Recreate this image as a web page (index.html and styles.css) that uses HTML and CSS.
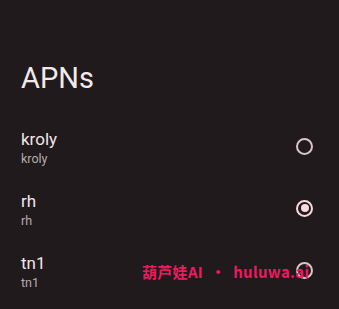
FILE: index.html
```html
<!DOCTYPE html>
<html lang="en">
<head>
    <meta charset="UTF-8">
    <meta name="viewport" content="width=device-width, initial-scale=1.0">
    <title>APNs</title>
    <link rel="stylesheet" href="styles.css">
</head>
<body>
    <h1 class="page-title">APNs</h1>

    <ul class="apn-list">
        <li class="apn-item">
            <div class="apn-text">
                <div class="apn-name">kroly</div>
                <div class="apn-sub">kroly</div>
            </div>
            <span class="radio"></span>
        </li>
        <li class="apn-item">
            <div class="apn-text">
                <div class="apn-name">rh</div>
                <div class="apn-sub">rh</div>
            </div>
            <span class="radio checked"></span>
        </li>
        <li class="apn-item">
            <div class="apn-text">
                <div class="apn-name">tn1</div>
                <div class="apn-sub">tn1</div>
            </div>
            <span class="radio"></span>
        </li>
    </ul>

    <div class="watermark">葫芦娃AI &nbsp;•&nbsp; huluwa.ai</div>
</body>
</html>
```

FILE: styles.css
```css
body {
    margin: 0;
    background-color: #201a1c;
    font-family: Roboto, "Noto Sans", sans-serif;
    color: #ece0e2;
    position: relative;
    height: 309px;
    overflow: hidden;
}
.page-title {
    margin: 0;
    padding: 60px 0 0 21px;
    font-size: 29px;
    font-weight: 400;
    line-height: 36px;
    color: #f3e9eb;
}
.apn-list {
    list-style: none;
    margin: 0;
    padding: 0;
    margin-top: 21px;
}
.apn-item {
    display: flex;
    align-items: center;
    justify-content: space-between;
    height: 62px;
    padding: 0 26px 0 21px;
}
.apn-name {
    font-size: 17px;
    line-height: 22px;
    color: #f0e6e8;
}
.apn-sub {
    font-size: 12.5px;
    line-height: 18px;
    color: #b7abad;
}
.radio {
    width: 13px;
    height: 13px;
    border: 2px solid #d7c6c9;
    border-radius: 50%;
    position: relative;
    margin-top: -4px;
}
.radio.checked {
    border-color: #f5d9de;
}
.radio.checked::after {
    content: "";
    position: absolute;
    left: 2.5px;
    top: 2.5px;
    width: 8px;
    height: 8px;
    border-radius: 50%;
    background-color: #f8dce1;
}
.watermark {
    position: absolute;
    left: 142px;
    top: 261px;
    font-family: "Noto Sans CJK SC", sans-serif;
    font-size: 15px;
    font-weight: 700;
    letter-spacing: 0.3px;
    color: #ec1a5e;
    white-space: nowrap;
}
```
